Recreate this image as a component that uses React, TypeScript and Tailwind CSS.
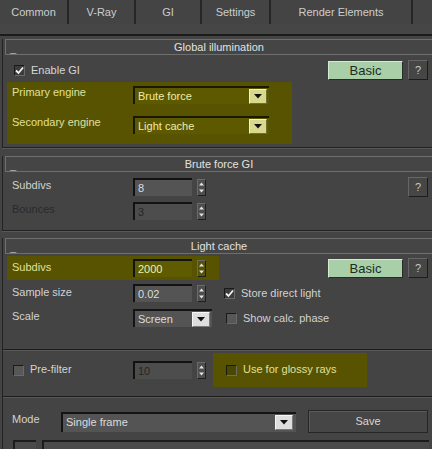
import React from "react";

const Spin = ({ olive }: { olive?: boolean }) => (
  <div
    className={`ml-[5px] w-[9px] h-[17px] flex items-center justify-center border border-t-[#6a6a6a] border-l-[#6a6a6a] border-r-[#202020] border-b-[#202020] ${olive ? "bg-[#55520a]" : "bg-[#4e4e4e]"}`}
  >
    <svg width="7" height="15" viewBox="0 0 7 15">
      <polygon points="1,5.5 3.5,2.5 6,5.5" fill="#e4e4e4" />
      <polygon points="1,9.5 3.5,12.5 6,9.5" fill="#e4e4e4" />
    </svg>
  </div>
);

const Field = ({
  value,
  olive,
  dim,
}: {
  value: string;
  olive?: boolean;
  dim?: boolean;
}) => (
  <div className="flex items-center">
    <div
      className={`w-[59px] h-[18px] border-t-2 border-l-2 border-[#121212] flex items-center pl-[3px] ${
        olive
          ? "bg-[#5f5b00] text-[#f0f0a8]"
          : dim
          ? "bg-[#4d4d4d] text-[#262626]"
          : "bg-[#545454] text-[#dcdcdc]"
      }`}
    >
      {value}
    </div>
    <Spin olive={olive} />
  </div>
);

const Arrow = ({ kind }: { kind: "olive" | "gray" }) => (
  <div
    className={`w-[18px] h-[15px] flex items-center justify-center border ${
      kind === "olive"
        ? "bg-[#d9d98e] border-t-[#f4f4c4] border-l-[#f4f4c4] border-r-[#6e6e30] border-b-[#6e6e30]"
        : "bg-[#dedede] border-t-[#f6f6f6] border-l-[#f6f6f6] border-r-[#7a7a7a] border-b-[#7a7a7a]"
    }`}
  >
    <svg width="8" height="5" viewBox="0 0 8 5">
      <polygon points="0,0 8,0 4,4.5" fill="#111" />
    </svg>
  </div>
);

const Check = ({ checked, olive }: { checked?: boolean; olive?: boolean }) => (
  <div
    className={`w-[11px] h-[11px] flex items-center justify-center border border-t-[#1a1a1a] border-l-[#1a1a1a] border-r-[#6a6a6a] border-b-[#6a6a6a] ${
      olive ? "bg-[#4a4700]" : checked ? "bg-[#3c3c3c]" : "bg-[#575757]"
    }`}
  >
    {checked && (
      <svg width="9" height="9" viewBox="0 0 9 9">
        <polyline
          points="1,4.5 3.5,7 8,1.5"
          fill="none"
          stroke="#f2f2f2"
          strokeWidth="1.8"
        />
      </svg>
    )}
  </div>
);

const Basic = () => (
  <div className="w-[75px] h-[19px] flex items-center justify-center bg-[#a8cfa8] border border-t-[#d2ecd2] border-l-[#d2ecd2] border-r-[#2a2a2a] border-b-[#2a2a2a] text-[13px] text-[#1e2a1e]">
    Basic
  </div>
);

const Help = () => (
  <div className="ml-[5px] w-[20px] h-[20px] flex items-center justify-center bg-[#464646] border border-t-[#666] border-l-[#666] border-r-[#1c1c1c] border-b-[#1c1c1c] text-[#c8c8c8]">
    ?
  </div>
);

const Header = ({ title }: { title: string }) => (
  <div className="-mt-[8px] ml-[2px] h-[16px] border border-r-0 border-[#6f6f6f] flex items-end bg-[#454545]">
    <span className="w-[12px] pl-[4px] leading-[12px] text-[#f0f0f0] font-bold">_</span>
    <span className="flex-1 text-center leading-[14px] text-[#e2e2e2]">{title}</span>
    <span className="w-[12px]" />
  </div>
);

const Sep = () => (
  <div className="h-[2px] border-t border-[#1c1c1c] bg-[#575757]" />
);

const Rollout = ({
  className,
  children,
}: {
  className: string;
  children: React.ReactNode;
}) => (
  <div
    className={`ml-[2px] border-l border-b border-[#222] shadow-[0_1px_0_#585858] ${className}`}
  >
    {children}
  </div>
);

export default function App() {
  const tabs: [string, string][] = [
    ["Common", "w-[69px]"],
    ["V-Ray", "w-[67px]"],
    ["GI", "w-[66px]"],
    ["Settings", "w-[69px]"],
    ["Render Elements", "w-[142px]"],
  ];
  return (
    <div className="w-[432px] h-[449px] overflow-hidden bg-[#444444] text-[11px] text-[#d2d2d2] font-['Liberation_Sans',Arial,sans-serif] leading-none">
      {/* Tabs */}
      <div className="h-[24px] flex">
        {tabs.map(([t, w]) => (
          <div
            key={t}
            className={`${w} h-full flex items-center justify-center border-r-2 border-[#262626] text-[#cdcdcd] text-[11px]`}
          >
            {t}
          </div>
        ))}
      </div>
      <div className="h-[10px] bg-[#464646]" />
      <div className="h-[2px] bg-[#1c1c1c]" />

      {/* Global illumination */}
      <Rollout className="mt-[11px] pb-[3px]">
        <Header title="Global illumination" />
        <div className="mt-[3px] h-[24px] flex items-center pl-[11px] pr-[4px]">
          <Check checked />
          <span className="ml-[6px] text-[#d6d6d6]">Enable GI</span>
          <div className="ml-auto flex items-center">
            <Basic />
            <Help />
          </div>
        </div>
        <div className="ml-[4px] w-[285px] h-[62px] bg-[#575300] pt-[4px] pl-[5px] flex flex-col gap-[12px] text-[#e0e09c]">
          <div className="h-[18px] flex items-center">
            <span className="w-[121px] mb-[6px]">Primary engine</span>
            <div className="w-[136px] h-[18px] border-t-2 border-l-2 border-[#1a1800] bg-[#5d5900] flex items-center pl-[3px] pr-[2px] text-[#ececac]">
              <span className="flex-1">Brute force</span>
              <Arrow kind="olive" />
            </div>
          </div>
          <div className="h-[18px] flex items-center">
            <span className="w-[121px] mb-[6px]">Secondary engine</span>
            <div className="w-[136px] h-[18px] border-t-2 border-l-2 border-[#1a1800] bg-[#5d5900] flex items-center pl-[3px] pr-[2px] text-[#ececac]">
              <span className="flex-1">Light cache</span>
              <Arrow kind="olive" />
            </div>
          </div>
        </div>
      </Rollout>

      {/* Brute force GI */}
      <Rollout className="mt-[16px] pb-[9px]">
        <Header title="Brute force GI" />
        <div className="mt-[5px] h-[20px] flex items-center pl-[9px] pr-[4px]">
          <span className="w-[121px] mb-[3px]">Subdivs</span>
          <Field value="8" />
          <div className="ml-auto">
            <Help />
          </div>
        </div>
        <div className="mt-[4px] h-[20px] flex items-center pl-[9px]">
          <span className="w-[121px] mb-[3px] text-[#2a2a2a]">Bounces</span>
          <Field value="3" dim />
        </div>
      </Rollout>

      {/* Light cache */}
      <Rollout className="mt-[15px]">
        <Header title="Light cache" />
        <div className="mt-[2px] h-[24px] flex items-center pr-[4px]">
          <div className="ml-[4px] w-[212px] h-[24px] bg-[#575300] flex items-center pl-[5px] text-[#e0e09c]">
            <span className="w-[121px] mb-[2px]">Subdivs</span>
            <Field value="2000" olive />
          </div>
          <div className="ml-auto flex items-center">
            <Basic />
            <Help />
          </div>
        </div>
        <div className="mt-[3px] h-[20px] flex items-center pl-[9px]">
          <span className="w-[121px] mb-[2px]">Sample size</span>
          <Field value="0.02" />
          <div className="ml-[18px] flex items-center">
            <Check checked />
            <span className="ml-[6px]">Store direct light</span>
          </div>
        </div>
        <div className="mt-[5px] h-[20px] flex items-center pl-[9px]">
          <span className="w-[121px] mb-[4px]">Scale</span>
          <div className="w-[79px] h-[18px] border-t-2 border-l-2 border-[#141414] bg-[#545454] flex items-center pl-[3px] pr-[2px] text-[#dcdcdc]">
            <span className="flex-1">Screen</span>
            <Arrow kind="gray" />
          </div>
          <div className="ml-[14px] flex items-center">
            <Check />
            <span className="ml-[6px]">Show calc. phase</span>
          </div>
        </div>
        <div className="mt-[21px]">
          <Sep />
        </div>
        <div className="mt-[2px] h-[34px] flex items-center">
          <div className="pl-[10px] w-[130px] flex items-center">
            <Check />
            <span className="ml-[6px] mb-[2px]">Pre-filter</span>
          </div>
          <Field value="10" dim />
          <div className="ml-[7px] w-[154px] h-[34px] bg-[#575300] flex items-center pl-[13px] text-[#e0e09c]">
            <Check olive />
            <span className="ml-[6px] mb-[1px]">Use for glossy rays</span>
          </div>
        </div>
        <div className="mt-[9px]">
          <Sep />
        </div>
        <div className="mt-[12px] h-[23px] flex items-center pl-[9px] pr-[4px]">
          <span className="w-[49px] mb-[4px]">Mode</span>
          <div className="w-[235px] h-[20px] border-t-2 border-l-2 border-[#141414] bg-[#545454] flex items-center pl-[3px] pr-[3px] text-[#dcdcdc]">
            <span className="flex-1">Single frame</span>
            <Arrow kind="gray" />
          </div>
          <div className="ml-auto w-[120px] h-[23px] flex items-center justify-center border border-[#262626] shadow-[inset_1px_1px_0_#5a5a5a] bg-[#464646] text-[#d6d6d6]">
            Save
          </div>
        </div>
        <div className="mt-[7px] flex pr-[3px]">
          <div className="ml-[10px] w-[23px] h-[20px] border-t-2 border-l-2 border-[#1c1c1c] bg-[#4a4a4a]" />
          <div className="ml-[6px] flex-1 h-[20px] border-t-2 border-l-2 border-[#1c1c1c] bg-[#4a4a4a]" />
        </div>
      </Rollout>
    </div>
  );
}
